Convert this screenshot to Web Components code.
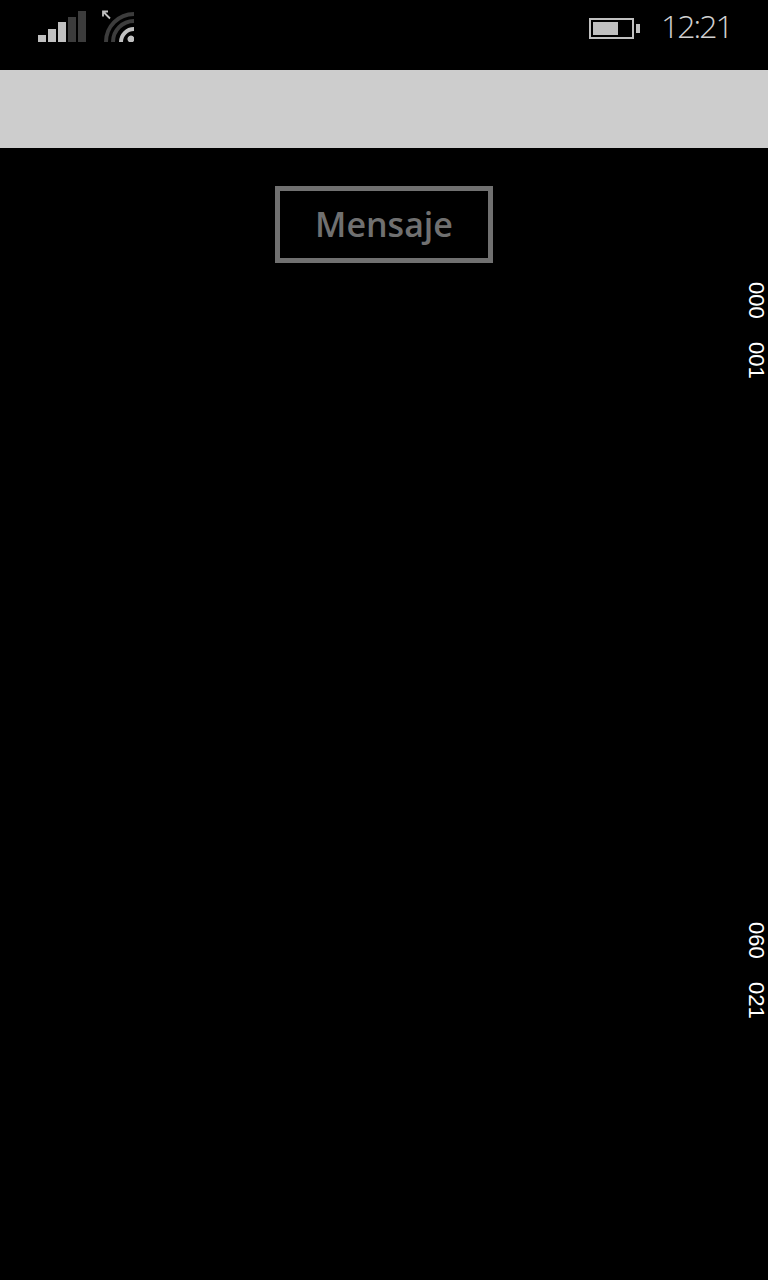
<!DOCTYPE html>
<html>
<head>
<meta charset="utf-8">
<style>
html, body { margin: 0; height: 100%; background: #000; }
body { font-family: "Open Sans", "Noto Sans", sans-serif; }
</style>
</head>
<body>
<phone-screen>
  <status-bar time="12:21"></status-bar>
  <title-strip></title-strip>
  <message-button>Mensaje</message-button>
  <side-ruler top="000" bottom="001" style="margin-top:19px"></side-ruler>
  <side-ruler top="060" bottom="021" style="margin-top:544px"></side-ruler>
</phone-screen>
<script>
class PhoneScreen extends HTMLElement {
  constructor() {
    super();
    this.attachShadow({ mode: "open" });
    this.shadowRoot.innerHTML = `
<style>
:host { display: flex; flex-direction: column; width: 768px; height: 1280px; background: #000; overflow: hidden; }
</style>
<slot></slot>`;
  }
}

class StatusBar extends HTMLElement {
  constructor() {
    super();
    this.attachShadow({ mode: "open" });
    this.shadowRoot.innerHTML = `
<style>
:host { display: flex; align-items: flex-start; height: 70px; position: relative; color: #d0d0d0; }
svg { display: block; flex: none; }
.time { font-size: 32px; font-weight: 300; line-height: 42px; margin: 5px 0 0 21px; letter-spacing: -2px; }
.signal { margin: 11px 0 0 38px; }
.wifi { margin: 8px 0 0 14px; }
.battery { margin: 18px 0 0 451px; }
</style>
<svg class="signal" width="48" height="31" viewBox="0 0 48 31">
  <rect x="0" y="24" width="8" height="7" fill="#c0c0c0"/>
  <rect x="10" y="18" width="8" height="13" fill="#c0c0c0"/>
  <rect x="20" y="11" width="8" height="20" fill="#c0c0c0"/>
  <rect x="30" y="6" width="8" height="25" fill="#3c3c3c"/>
  <rect x="40" y="0" width="8" height="31" fill="#3c3c3c"/>
</svg>
<svg class="wifi" width="38" height="34" viewBox="0 0 38 34" fill="none">
  <path d="M10 10.500 3 3.500M3 8.500V3.500H8" stroke="#c0c0c0" stroke-width="1.800"/>
  <path d="M6 34A28 28 0 0 1 34 6" stroke="#3c3c3c" stroke-width="4"/>
  <path d="M13 34A21 21 0 0 1 34 13" stroke="#3c3c3c" stroke-width="4"/>
  <path d="M21 34A13 13 0 0 1 34 21" stroke="#c0c0c0" stroke-width="4"/>
  <path d="M31 27.500a3.500 3.500 0 0 1 3 1.700V32.800a3.500 3.500 0 1 1-3-5.300Z" fill="#c0c0c0"/>
</svg>
<svg class="battery" width="51" height="21" viewBox="0 0 51 21">
  <rect x="1" y="1" width="43" height="19" fill="none" stroke="#c0c0c0" stroke-width="2"/>
  <rect x="4" y="4" width="25" height="13" fill="#c0c0c0"/>
  <rect x="47" y="6" width="4" height="9" fill="#c0c0c0"/>
</svg>
<span class="time"></span>`;
    this.shadowRoot.querySelector(".time").textContent = this.getAttribute("time");
  }
}

class TitleStrip extends HTMLElement {
  constructor() {
    super();
    this.attachShadow({ mode: "open" });
    this.shadowRoot.innerHTML = `
<style>
:host { display: block; height: 78px; background: #cdcdcd; }
</style>`;
  }
}

class MessageButton extends HTMLElement {
  constructor() {
    super();
    this.attachShadow({ mode: "open" });
    this.shadowRoot.innerHTML = `
<style>
:host { display: flex; align-items: center; justify-content: center; box-sizing: border-box; align-self: center; width: 218px; height: 77px; margin-top: 38px; padding-bottom: 2px; border: 5px solid #707070; color: #707070; font-size: 34px; font-weight: 600; }
</style>
<slot></slot>`;
  }
}

class SideRuler extends HTMLElement {
  constructor() {
    super();
    this.attachShadow({ mode: "open" });
    this.shadowRoot.innerHTML = `
<style>
:host { display: flex; flex-direction: column; gap: 24px; align-self: flex-end; margin-right: 1px; color: #fff; font: 22px/22px "Liberation Sans", sans-serif; }
span { writing-mode: vertical-rl; height: 36px; }
</style>
<span></span><span></span>`;
    const spans = this.shadowRoot.querySelectorAll("span");
    spans[0].textContent = this.getAttribute("top");
    spans[1].textContent = this.getAttribute("bottom");
  }
}

customElements.define("phone-screen", PhoneScreen);
customElements.define("status-bar", StatusBar);
customElements.define("title-strip", TitleStrip);
customElements.define("message-button", MessageButton);
customElements.define("side-ruler", SideRuler);
</script>
</body>
</html>
